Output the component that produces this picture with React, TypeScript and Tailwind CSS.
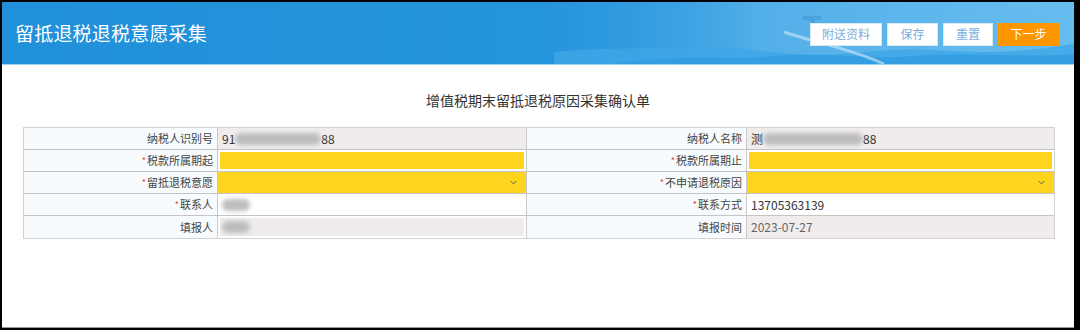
import React from 'react';
import { ChevronDown } from 'lucide-react';

const font = { fontFamily: '"Microsoft YaHei", "Noto Sans CJK SC", "Noto Sans", sans-serif' };

const Blur = ({ w }: { w: number }) => (
  <span className="inline-block h-[12px] rounded-full bg-[#bdbdbd] blur-[2px] align-middle" style={{ width: w }} />
);

const Label = ({ text, req }: { text: string; req?: boolean }) => (
  <div className="flex items-center justify-end bg-[#f7fbfd] pr-[4px] text-[11px] text-[#444] border-r border-[#c9c9c9]">
    {req && <span className="text-[9px] text-[#e43b3b] mr-[1px]">*</span>}
    {text}
  </div>
);

const Cell = ({ kind, children, last }: { kind: 'gray' | 'input' | 'select' | 'white' | 'grayInset'; children?: React.ReactNode; last?: boolean }) => {
  const edge = last ? '' : 'border-r border-[#c9c9c9]';
  if (kind === 'input') {
    return (
      <div className={`bg-white p-[2px] ${edge}`}>
        <div className="h-full bg-[#ffd41f]" />
      </div>
    );
  }
  if (kind === 'select') {
    return (
      <div className={`flex items-center justify-end bg-[#ffd41f] pr-[7px] ${edge}`}>
        <ChevronDown className="w-[11px] h-[11px] text-[#555]" strokeWidth={2} />
      </div>
    );
  }
  if (kind === 'grayInset') {
    return (
      <div className={`bg-white p-[2px] ${edge}`}>
        <div className="flex h-full items-center bg-[#f0ecec] pl-[2px] text-[12px] text-[#333]">{children}</div>
      </div>
    );
  }
  return (
    <div className={`flex items-center pl-[4px] text-[12px] text-[#333] ${kind === 'gray' ? 'bg-[#f0ecec]' : 'bg-white'} ${edge}`}>
      {children}
    </div>
  );
};

export default function App() {
  return (
    <div className="w-[1080px] h-[330px] bg-black pl-[2px] pt-[2px] pr-[6px] pb-[2px]" style={font}>
      <div className="h-full bg-white border-b border-[#9a9a9a] flex flex-col">
        {/* Header */}
        <div className="relative h-[63px] overflow-hidden bg-gradient-to-r from-[#2190da] via-[#2494dc] to-[#5bb6ee] border-b border-[#9fd3f3]">
          <svg className="absolute right-0 top-0" width="520" height="62" viewBox="0 0 520 62">
            <defs>
              <linearGradient id="sky" x1="0" x2="1" y1="0" y2="0">
                <stop offset="0" stopColor="#2494dc" stopOpacity="0" />
                <stop offset="0.4" stopColor="#5ab3ea" stopOpacity="0.75" />
                <stop offset="1" stopColor="#66bdef" />
              </linearGradient>
            </defs>
            <rect x="0" y="0" width="520" height="62" fill="url(#sky)" />
            <path d="M0 50 C60 44 100 48 140 46 C180 44 210 50 240 52 C290 56 330 44 380 48 C430 52 470 50 520 42 L520 62 L0 62 Z" fill="#3ea6e6" opacity="0.8" />
            <path d="M60 62 C120 52 170 58 220 54 C270 50 320 58 360 54 C420 50 470 56 520 52 L520 62 Z" fill="#2d9ae0" opacity="0.7" />
            <path d="M230 30 C260 40 300 48 330 62" stroke="#cfe9fa" strokeWidth="3" fill="none" opacity="0.6" />
            <rect x="249" y="14" width="18" height="4" fill="#4aa2dc" />
            <rect x="256" y="14" width="5" height="12" fill="#4aa2dc" />
          </svg>
          <div className="relative flex h-full items-center justify-between pl-[13px] pr-[15px]">
            <div className="text-[19px] text-white tracking-[0.2px]">留抵退税退税意愿采集</div>
            <div className="flex items-center gap-[5px] pt-[2px]">
              <button className="h-[23px] w-[72px] bg-white text-[12px] text-[#7aaee0] border border-[#d8e8f5]">附送资料</button>
              <button className="h-[23px] w-[51px] bg-white text-[12px] text-[#7aaee0] border border-[#d8e8f5]">保存</button>
              <button className="h-[23px] w-[50px] bg-white text-[12px] text-[#7aaee0] border border-[#d8e8f5]">重置</button>
              <button className="h-[23px] w-[61px] bg-[#ff9500] text-[12px] text-white">下一步</button>
            </div>
          </div>
        </div>

        {/* Subtitle */}
        <div className="mt-[25px] text-center text-[14px] text-[#333]">增值税期末留抵退税原因采集确认单</div>

        {/* Table */}
        <div className="ml-[21px] mt-[16px] w-[1032px] border border-[#d2d2d2] grid grid-cols-[194px_309px_220px_1fr] auto-rows-[22px] [&>*]:border-b [&>*]:border-b-[#c4c4c4] [&>*:nth-last-child(-n+4)]:border-b-0">
          <Label text="纳税人识别号" />
          <Cell kind="gray">
            91<Blur w={86} />88
          </Cell>
          <Label text="纳税人名称" />
          <Cell kind="gray" last>
            测<Blur w={100} />88
          </Cell>

          <Label text="税款所属期起" req />
          <Cell kind="input" />
          <Label text="税款所属期止" req />
          <Cell kind="input" last />

          <Label text="留抵退税意愿" req />
          <Cell kind="select" />
          <Label text="不申请退税原因" req />
          <Cell kind="select" last />

          <Label text="联系人" req />
          <Cell kind="white">
            <Blur w={28} />
          </Cell>
          <Label text="联系方式" req />
          <Cell kind="white" last>
            13705363139
          </Cell>

          <Label text="填报人" />
          <Cell kind="grayInset">
            <Blur w={28} />
          </Cell>
          <Label text="填报时间" />
          <Cell kind="gray" last>
            <span className="text-[#666]">2023-07-27</span>
          </Cell>
        </div>
      </div>
    </div>
  );
}
